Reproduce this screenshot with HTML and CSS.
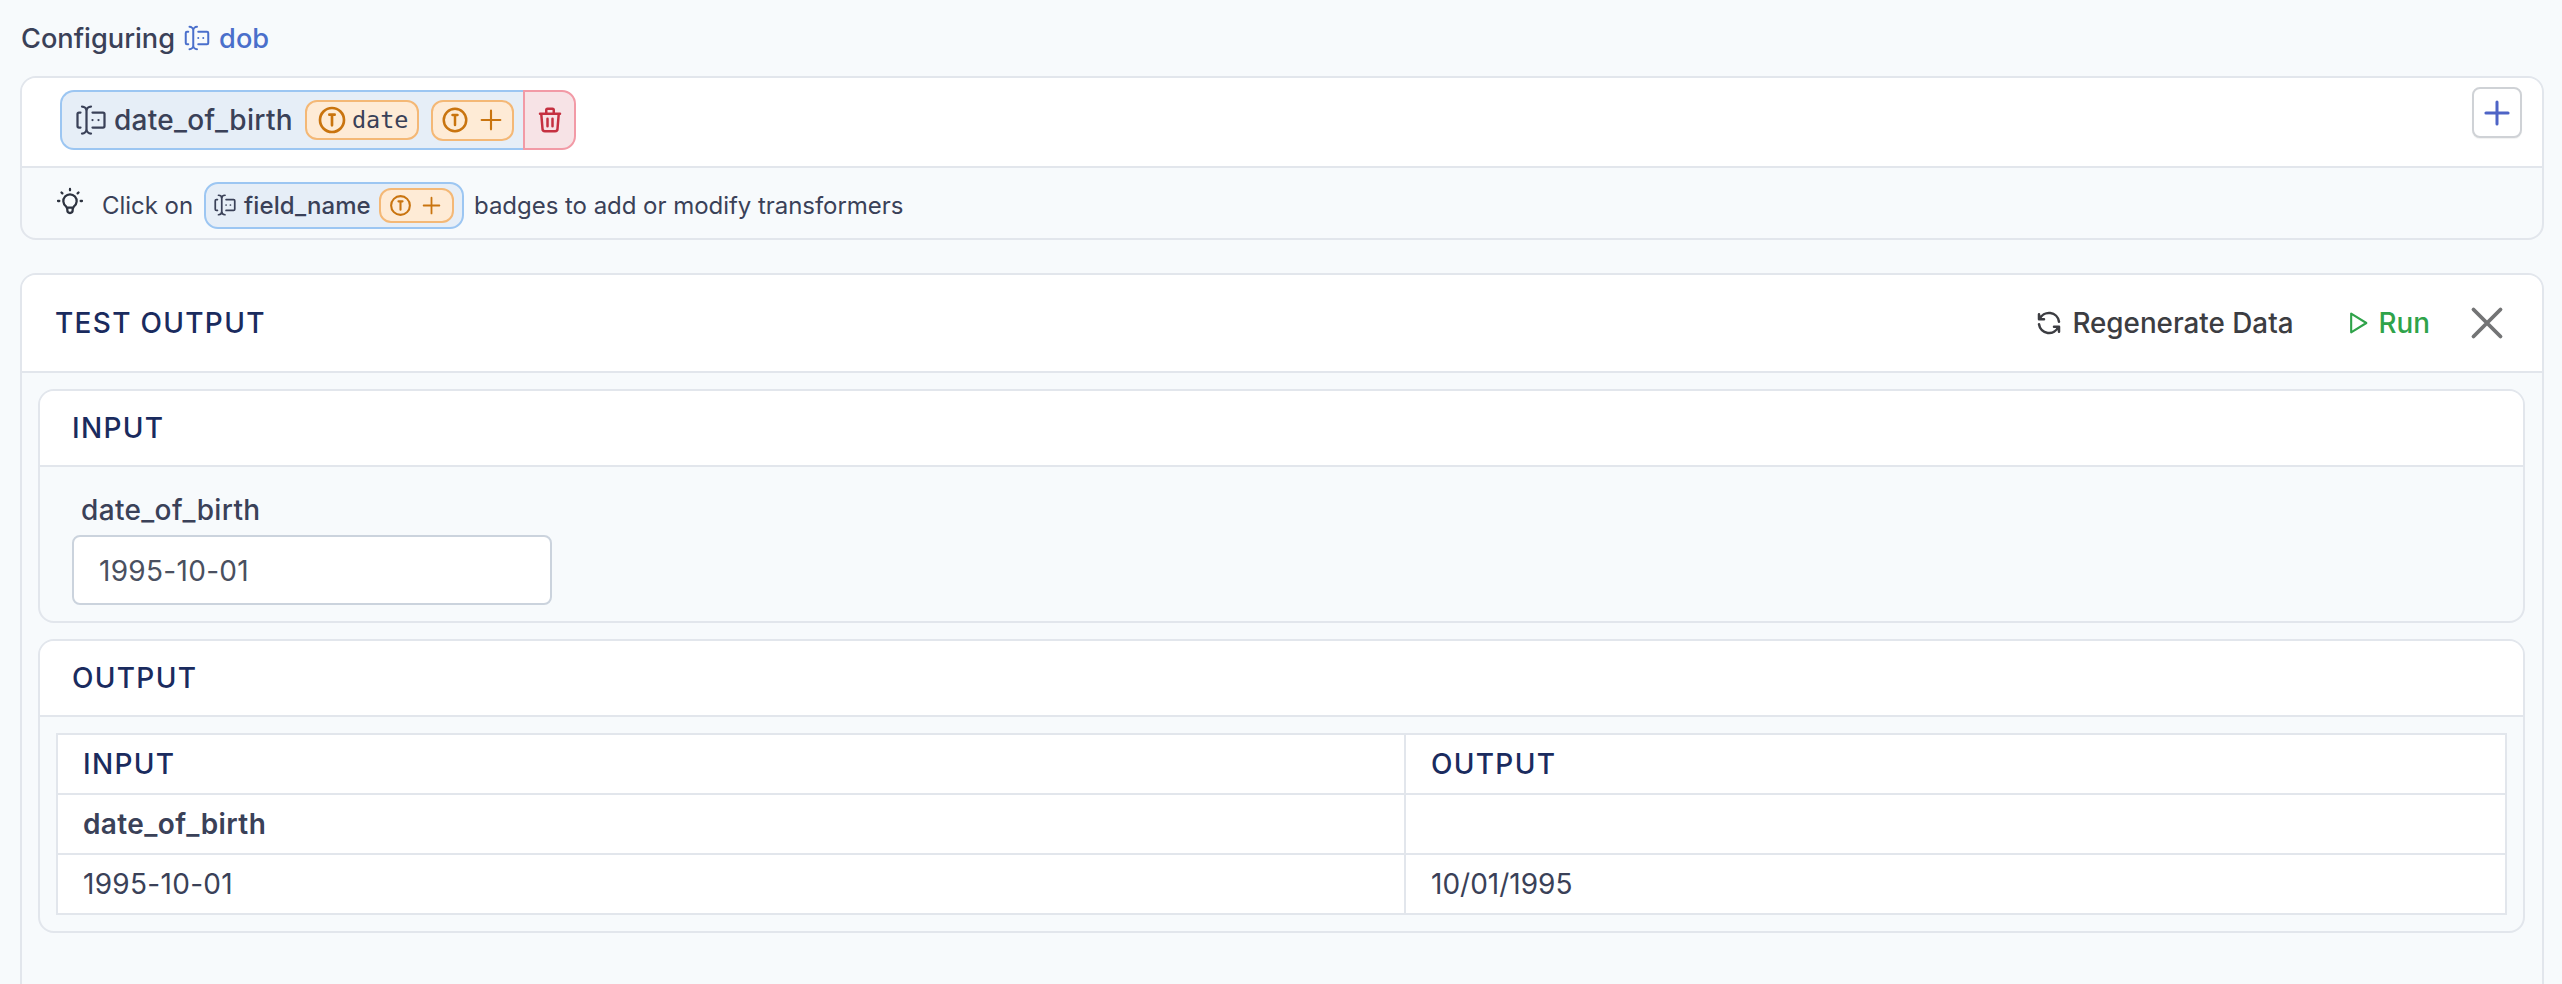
FILE: index.html
```html
<!DOCTYPE html>
<html lang="en">
<head>
<meta charset="utf-8">
<title>Configuring dob</title>
<link rel="stylesheet" href="styles.css">
</head>
<body>
<svg class="defs" aria-hidden="true">
  <symbol id="i-forms" viewBox="0 0 24 24"><path d="M12 3a3 3 0 0 0 -3 3v12a3 3 0 0 0 3 3M6 3a3 3 0 0 1 3 3v12a3 3 0 0 1 -3 3M13 7h7a1 1 0 0 1 1 1v8a1 1 0 0 1 -1 1h-7M5 7h-1a1 1 0 0 0 -1 1v8a1 1 0 0 0 1 1h1M17 12h.01M13 12h.01"/></symbol>
  <symbol id="i-t" viewBox="0 0 24 24"><path d="M3 12a9 9 0 1 0 18 0a9 9 0 1 0 -18 0M10 8h4M12 8v8"/></symbol>
  <symbol id="i-plus" viewBox="0 0 24 24"><path d="M12 5v14M5 12h14"/></symbol>
  <symbol id="i-trash" viewBox="0 0 24 24"><path d="M4 7h16M10 11v6M14 11v6M5 7l1 12a2 2 0 0 0 2 2h8a2 2 0 0 0 2 -2l1 -12M9 7v-3a1 1 0 0 1 1 -1h4a1 1 0 0 1 1 1v3"/></symbol>
  <symbol id="i-bulb" viewBox="0 0 24 24"><path d="M3 12h1m8 -9v1m8 8h1m-15.4 -6.4l.7 .7m12.1 -.7l-.7 .7M9 16a5 5 0 1 1 6 0a3.5 3.5 0 0 0 -1 3a2 2 0 0 1 -4 0a3.5 3.5 0 0 0 -1 -3M9.7 17h4.6"/></symbol>
  <symbol id="i-refresh" viewBox="0 0 24 24"><path d="M20 11a8.1 8.1 0 0 0 -15.5 -2m-.5 -4v4h4M4 13a8.1 8.1 0 0 0 15.5 2m.5 4v-4h-4"/></symbol>
  <symbol id="i-play" viewBox="0 0 24 24"><path d="M7 4v16l13 -8z"/></symbol>
  <symbol id="i-x" viewBox="0 0 24 24"><path d="M18 6l-12 12M6 6l12 12"/></symbol>
</svg>

<div class="page">
  <div class="title">
    <span>Configuring</span>
    <span class="title-field"><svg class="ico ico-title"><use href="#i-forms"/></svg>dob</span>
  </div>

  <section class="card config">
    <div class="config-top">
      <div class="chip">
        <div class="chip-main">
          <svg class="ico ico-field"><use href="#i-forms"/></svg>
          <span class="chip-name">date_of_birth</span>
          <span class="tbadge tbadge-date"><svg class="ico ico-t"><use href="#i-t"/></svg><span class="mono">date</span></span>
          <span class="tbadge tbadge-add"><svg class="ico ico-t2"><use href="#i-t"/></svg><svg class="ico ico-p"><use href="#i-plus"/></svg></span>
        </div>
        <div class="chip-del"><svg class="ico ico-trash"><use href="#i-trash"/></svg></div>
      </div>
      <button class="add-btn" type="button"><svg class="ico ico-add"><use href="#i-plus"/></svg></button>
    </div>
    <div class="hint">
      <svg class="ico ico-bulb"><use href="#i-bulb"/></svg>
      <span class="hint-click">Click on</span>
      <span class="mini-chip">
        <svg class="ico ico-mini"><use href="#i-forms"/></svg>
        <span class="mini-name">field_name</span>
        <span class="tbadge tbadge-mini"><svg class="ico ico-t3"><use href="#i-t"/></svg><svg class="ico ico-p2"><use href="#i-plus"/></svg></span>
      </span>
      <span>badges to add or modify transformers</span>
    </div>
  </section>

  <section class="card test">
    <header class="test-head">
      <h2 class="heading">TEST OUTPUT</h2>
      <div class="actions">
        <span class="action regen"><svg class="ico ico-refresh"><use href="#i-refresh"/></svg>Regenerate Data</span>
        <span class="action run"><svg class="ico ico-play"><use href="#i-play"/></svg>Run</span>
        <svg class="ico ico-x"><use href="#i-x"/></svg>
      </div>
    </header>
    <div class="test-body">
      <section class="card sub">
        <h3 class="heading sub-head">INPUT</h3>
        <div class="input-body">
          <label class="field-label">date_of_birth</label>
          <div class="field-input digits">1995-10-01</div>
        </div>
      </section>
      <section class="card sub">
        <h3 class="heading sub-head">OUTPUT</h3>
        <div class="table-wrap">
          <table class="result">
            <colgroup><col class="col-a"><col></colgroup>
            <tr><th>INPUT</th><th>OUTPUT</th></tr>
            <tr><td class="strong">date_of_birth</td><td></td></tr>
            <tr><td class="digits">1995-10-01</td><td>10/01/1995</td></tr>
          </table>
        </div>
      </section>
    </div>
  </section>
</div>
</body>
</html>
```
FILE: styles.css
```css
* { box-sizing: border-box; }
html, body { margin: 0; height: 100%; overflow: hidden; }
body {
  background: #f7fafc;
  color: #3a4158;
  font-family: Inter, "Liberation Sans", sans-serif;
  font-size: 28px;
}
.defs { display: none; }
.ico {
  fill: none;
  stroke: currentColor;
  stroke-width: 2;
  stroke-linecap: round;
  stroke-linejoin: round;
  flex: none;
  display: block;
}
.page { padding: 0 18px 0 20px; height: 100%; }

.title {
  height: 76px;
  display: flex;
  align-items: center;
  gap: 7px;
  padding-left: 1px;
  font-size: 27.2px;
  font-weight: 500;
}
.title-field { display: flex; align-items: center; gap: 7px; color: #4a6fcb; }
.ico-title { width: 30px; height: 30px; stroke-width: 1.6; }

.card {
  background: #f7fafc;
  border: 2px solid #e2e6ec;
  border-radius: 16px;
  overflow: hidden;
}
.config { height: 164px; }
.config-top {
  height: 90px;
  background: #fff;
  border-bottom: 2px solid #e2e6ec;
  padding: 9px 20px 0 38px;
  display: flex;
  justify-content: space-between;
  align-items: flex-start;
}
.chip {
  margin-top: 3px;
  height: 60px;
  width: 516px;
  display: flex;
}
.chip-main {
  flex: 1;
  display: flex;
  align-items: center;
  background: #e6eef7;
  border: 2px solid #9cc6f2;
  border-right: 0;
  border-radius: 14px 0 0 14px;
  padding-left: 11px;
}
.ico-field { width: 36px; height: 36px; stroke-width: 1.5; }
.chip-name { margin-left: 5px; font-weight: 500; letter-spacing: .3px; }
.tbadge {
  display: flex;
  align-items: center;
  background: #feebd6;
  border: 2px solid #f4b876;
  border-radius: 12px;
  color: #c9740f;
}
.tbadge-date { margin-left: 12px; width: 114px; height: 40px; padding-left: 9px; gap: 4px; }
.mono {
  font-family: "DejaVu Sans Mono", "Liberation Mono", monospace;
  font-size: 23.5px;
  color: #3a4158;
}
.ico-t { width: 32px; height: 32px; }
.tbadge-add { margin-left: 12px; width: 83px; height: 41px; padding-left: 7px; gap: 5px; }
.ico-t2 { width: 30px; height: 30px; }
.ico-p { width: 32px; height: 32px; stroke-width: 1.6; }
.chip-del {
  width: 53px;
  display: flex;
  align-items: center;
  justify-content: center;
  background: #f7e3e6;
  border: 2px solid #f29aa6;
  border-radius: 0 14px 14px 0;
  color: #c53040;
}
.ico-trash { width: 30px; height: 30px; }
.add-btn {
  width: 50px;
  height: 51px;
  padding: 0;
  display: flex;
  align-items: center;
  justify-content: center;
  background: #fff;
  border: 2px solid #cfd2d6;
  border-radius: 8px;
  box-shadow: 0 1px 1px rgba(0,0,0,.06);
  color: #4e64c6;
}
.ico-add { width: 38px; height: 38px; stroke-width: 1.9; }

.hint {
  height: 70px;
  display: flex;
  align-items: center;
  padding: 4px 0 0 32px;
  font-size: 24px;
  letter-spacing: -.04px;
}
.ico-bulb { width: 32px; height: 32px; stroke-width: 1.7; color: #2d3340; margin-top: -8px; margin-right: 16px; }
.hint-click { margin-right: 11px; }
.mini-chip {
  display: flex;
  align-items: center;
  width: 260px;
  height: 47px;
  padding-left: 6px;
  background: #e6eef7;
  border: 2px solid #9cc6f2;
  border-radius: 14px;
  margin-right: 10px;
}
.ico-mini { width: 26px; height: 26px; stroke-width: 1.6; }
.mini-name { margin-left: 6px; font-weight: 500; letter-spacing: .1px; }
.tbadge-mini { margin-left: 8px; width: 75px; height: 35px; padding-left: 7px; gap: 5px; }
.ico-t3 { width: 25px; height: 25px; }
.ico-p2 { width: 27px; height: 27px; stroke-width: 1.6; }

.test { margin-top: 33px; height: 780px; }
.test-head {
  height: 98px;
  background: #fff;
  border-bottom: 2px solid #e2e6ec;
  display: flex;
  align-items: center;
  justify-content: space-between;
  padding: 0 28px 0 33px;
}
.heading {
  margin: 0;
  font-size: 28px;
  font-weight: 500;
  letter-spacing: 1.3px;
  color: #1a2b5e;
}
.actions { display: flex; align-items: center; }
.action { display: flex; align-items: center; font-weight: 500; font-size: 27.8px; }
.regen { color: #3c3d42; gap: 8px; margin-right: 49px; }
.ico-refresh { width: 30px; height: 30px; }
.run { color: #2fa34a; gap: 8px; margin-right: 30px; }
.ico-play { width: 28px; height: 28px; stroke-width: 1.8; }
.ico-x { width: 54px; height: 54px; stroke-width: 1.7; color: #737475; }

.test-body { padding: 16px 17px 0 16px; display: flex; flex-direction: column; gap: 16px; }
.sub { background: #f7fafc; }
.sub-head {
  height: 76px;
  background: #fff;
  border-bottom: 2px solid #e2e6ec;
  display: flex;
  align-items: center;
  padding-left: 32px;
}
.input-body { height: 154px; padding: 25px 0 0 32px; }
.field-label { display: block; margin-left: 9px; font-weight: 500; line-height: 36px; letter-spacing: .35px; }
.field-input {
  margin-top: 7px;
  width: 480px;
  height: 70px;
  background: #fff;
  border: 2px solid #cbd3dd;
  border-radius: 8px;
  display: flex;
  align-items: center;
  padding: 2px 0 0 25px;
  color: #4a5060;
}
.digits { letter-spacing: .3px; }
.table-wrap { padding: 16px; }
.result {
  width: 100%;
  table-layout: fixed;
  border-collapse: collapse;
  background: #fff;
  border: 2px solid #e2e6ec;
}
.col-a { width: 1348px; }
.result th, .result td {
  height: 60px;
  padding: 0 0 0 25px;
  border: 2px solid #e2e6ec;
  text-align: left;
  font-weight: 400;
}
.result th { font-weight: 500; letter-spacing: 1.3px; color: #1a2b5e; }
.result .strong { font-weight: 600; letter-spacing: .4px; }
```
